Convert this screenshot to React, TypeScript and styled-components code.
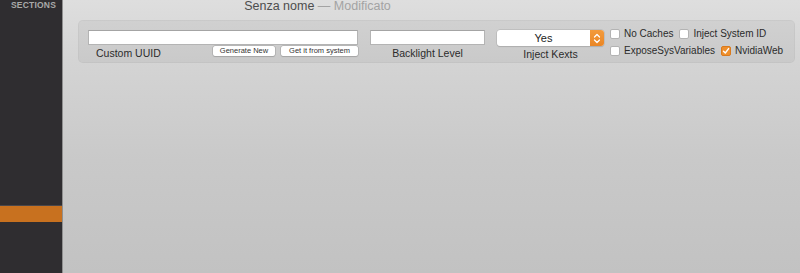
import React, { FC } from 'react'
import styled, { createGlobalStyle } from 'styled-components'

const Colors = {
    SIDEBAR: '#2f2d30',
    ORANGE: '#c8711f',
    ACCENT: '#ee8f2c',
    TEXT: '#2b2b2b',
    BORDER: '#a9a9a9',
}

const GlobalStyle = createGlobalStyle`
    html, body {
        margin: 0;
        padding: 0;
        width: 800px;
        height: 273px;
        overflow: hidden;
    }
    body {
        font-family: "Liberation Sans", Arial, sans-serif;
    }
`

const sections = Array.from({ length: 16 }, (_, i) => i)
const SELECTED = 12

const App: FC = () => {
    return (
        <Window>
            <GlobalStyle />
            <Sidebar>
                <SidebarTitle>SECTIONS</SidebarTitle>
                <SectionList>
                    {sections.map(i => (
                        <SectionRow key={i} selected={i === SELECTED} />
                    ))}
                </SectionList>
            </Sidebar>
            <Main>
                <TitleBar>
                    Senza nome <Dim>— Modificato</Dim>
                </TitleBar>
                <Panel>
                    <UuidColumn>
                        <TextField width={270} />
                        <UuidFooter>
                            <Label>Custom UUID</Label>
                            <Buttons>
                                <SmallButton>Generate New</SmallButton>
                                <SmallButton wide>Get it from system</SmallButton>
                            </Buttons>
                        </UuidFooter>
                    </UuidColumn>
                    <Column>
                        <TextField width={115} />
                        <CenterLabel>Backlight Level</CenterLabel>
                    </Column>
                    <Column>
                        <Popup>
                            <PopupValue>Yes</PopupValue>
                            <PopupArrows>
                                <svg width="8" height="11" viewBox="0 0 8 11">
                                    <path d="M1.5 4 L4 1.5 L6.5 4 M1.5 7 L4 9.5 L6.5 7" fill="none" stroke="#fff" strokeWidth="1.3" strokeLinecap="round" strokeLinejoin="round" />
                                </svg>
                            </PopupArrows>
                        </Popup>
                        <CenterLabel>Inject Kexts</CenterLabel>
                    </Column>
                    <Checks>
                        <CheckRow>
                            <Check label="No Caches" />
                            <Check label="Inject System ID" />
                        </CheckRow>
                        <CheckRow>
                            <Check label="ExposeSysVariables" />
                            <Check label="NvidiaWeb" checked />
                        </CheckRow>
                    </Checks>
                </Panel>
            </Main>
        </Window>
    )
}

const Check: FC<{ label: string; checked?: boolean }> = ({ label, checked }) => (
    <CheckItem>
        <Box checked={checked}>
            {checked && (
                <svg width="8" height="8" viewBox="0 0 8 8">
                    <path d="M1.5 4.2 L3.3 6 L6.6 1.6" fill="none" stroke="#fff" strokeWidth="1.4" strokeLinecap="round" strokeLinejoin="round" />
                </svg>
            )}
        </Box>
        <CheckText>{label}</CheckText>
    </CheckItem>
)

export default App

const Window = styled.div`
    display: flex;
    width: 800px;
    height: 273px;
    overflow: hidden;
`

const Sidebar = styled.div`
    width: 62px;
    flex-shrink: 0;
    background-color: ${Colors.SIDEBAR};
    border-right: 1px solid #8f8f8f;
    display: flex;
    flex-direction: column;
`

const SidebarTitle = styled.div`
    height: 14px;
    padding-left: 11px;
    font-size: 8.5px;
    font-weight: bold;
    letter-spacing: 0.2px;
    line-height: 10px;
    color: #a9a9a9;
`

const SectionList = styled.div`
    display: flex;
    flex-direction: column;
`

const SectionRow = styled.div<{ selected?: boolean }>`
    height: 16px;
    background-color: ${props => props.selected ? Colors.ORANGE : 'transparent'};
    box-shadow: ${props => props.selected ? '0 -1px 0 #4a474b' : 'none'};
`

const Main = styled.div`
    flex: 1;
    display: flex;
    flex-direction: column;
    background: linear-gradient(#dedede 0px, #d4d4d4 60px, #c9c9c9 160px, #c2c2c2 273px);
`

const TitleBar = styled.div`
    height: 20px;
    text-align: center;
    font-size: 12.5px;
    line-height: 13px;
    color: #4e4e4e;
    padding-right: 228px;
`

const Dim = styled.span`
    color: #a3a3a3;
`

const Panel = styled.div`
    margin: 0 5px 0 15px;
    height: 43px;
    box-sizing: border-box;
    padding: 9px 8px 0 9px;
    display: flex;
    align-items: flex-start;
    gap: 12px;
    background-color: rgba(0, 0, 0, 0.045);
    border: 1px solid rgba(0, 0, 0, 0.035);
    border-radius: 5px;
`

const Column = styled.div`
    display: flex;
    flex-direction: column;
`

const UuidColumn = styled(Column)`
    width: 270px;
`

const TextField = styled.div<{ width: number }>`
    width: ${props => props.width}px;
    height: 15px;
    box-sizing: border-box;
    background-color: #fff;
    border: 1px solid #b4b4b4;
    border-top-color: #a4a4a4;
`

const UuidFooter = styled.div`
    display: flex;
    justify-content: space-between;
    align-items: flex-start;
    padding-left: 8px;
`

const Label = styled.div`
    font-size: 10.5px;
    line-height: 13px;
    margin-top: 2px;
    color: ${Colors.TEXT};
`

const CenterLabel = styled(Label)`
    text-align: center;
`

const Buttons = styled.div`
    display: flex;
    gap: 6px;
    margin-top: 1px;
`

const SmallButton = styled.div<{ wide?: boolean }>`
    width: ${props => props.wide ? 77 : 62}px;
    height: 10px;
    box-sizing: border-box;
    background-color: #fff;
    border-radius: 2px;
    box-shadow: 0 0 0 0.5px #a0a0a0, 0 1px 1px rgba(0, 0, 0, 0.15);
    font-size: 7.5px;
    line-height: 10px;
    text-align: center;
    color: #333;
`

const Popup = styled.div`
    width: 107px;
    height: 16px;
    display: flex;
    border-radius: 3px;
    background-color: #fff;
    box-shadow: 0 0 0 0.5px #b0b0b0, 0 1px 1px rgba(0, 0, 0, 0.15);
    overflow: hidden;
`

const PopupValue = styled.div`
    flex: 1;
    text-align: center;
    font-size: 11px;
    line-height: 16px;
    color: #222;
`

const PopupArrows = styled.div`
    width: 14px;
    display: flex;
    align-items: center;
    justify-content: center;
    background: linear-gradient(#f39b3c, #ea8624);
`

const Checks = styled.div`
    display: flex;
    flex-direction: column;
    gap: 7px;
    margin-left: -6px;
    margin-top: -1px;
`

const CheckRow = styled.div`
    display: flex;
    gap: 6px;
`

const CheckItem = styled.div`
    display: flex;
    align-items: center;
    gap: 4px;
    height: 10px;
`

const Box = styled.div<{ checked?: boolean }>`
    width: 10px;
    height: 10px;
    box-sizing: border-box;
    border-radius: 2px;
    display: flex;
    align-items: center;
    justify-content: center;
    background-color: ${props => props.checked ? Colors.ACCENT : '#fff'};
    border: 1px solid ${props => props.checked ? '#d97a1e' : '#b3b3b3'};
`

const CheckText = styled.div`
    font-size: 10px;
    line-height: 12px;
    color: ${Colors.TEXT};
`
